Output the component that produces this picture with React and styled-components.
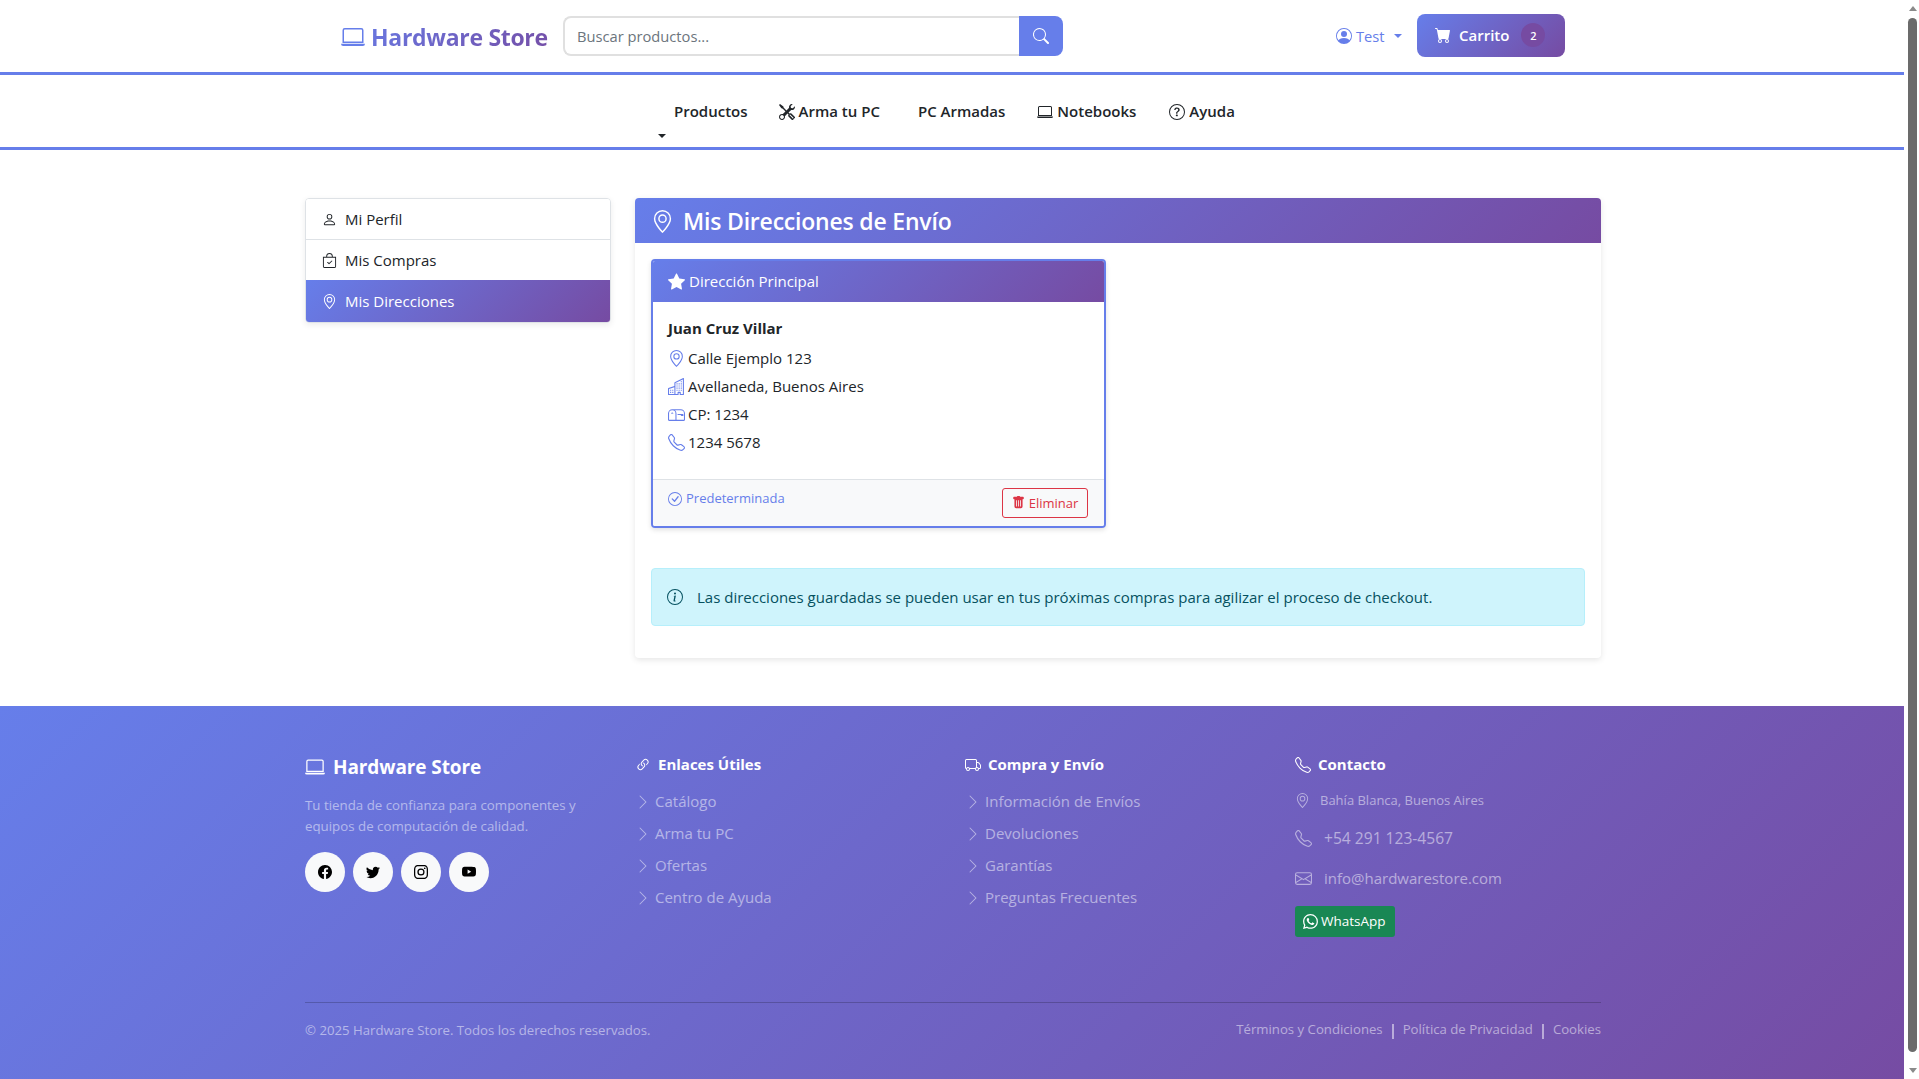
import styled, { createGlobalStyle } from "styled-components";
import {
  BsLaptop,
  BsSearch,
  BsPersonCircle,
  BsCartFill,
  BsTools,
  BsQuestionCircle,
  BsPerson,
  BsBagCheck,
  BsGeoAlt,
  BsStarFill,
  BsBuildings,
  BsMailbox,
  BsTelephone,
  BsCheckCircle,
  BsTrashFill,
  BsInfoCircle,
  BsFacebook,
  BsTwitter,
  BsInstagram,
  BsYoutube,
  BsLink45Deg,
  BsTruck,
  BsChevronRight,
  BsEnvelope,
  BsWhatsapp,
} from "react-icons/bs";

const gradient = "linear-gradient(135deg, #667eea 0%, #764ba2 100%)";

const GlobalStyle = createGlobalStyle`
  html {
    overflow: hidden;
  }
  body {
    margin: 0;
    padding-right: 13px;
    background: #fff;
    color: #212529;
    font-family: "Open Sans", "Noto Sans", sans-serif;
    font-size: 15px;
    line-height: 1.5;
  }
  * {
    box-sizing: border-box;
  }
`;

const ScrollTrack = styled.div`
  position: fixed;
  top: 0;
  right: 0;
  bottom: 0;
  width: 15px;
  padding: 6px 2px 6px 4px;
  background: #fff;
  display: flex;
  flex-direction: column;
  align-items: center;
`;

const ScrollArrow = styled.span`
  border-left: 4.5px solid transparent;
  border-right: 4.5px solid transparent;
  border-${(p) => (p.$down ? "top" : "bottom")}: 5px solid #8a8a8a;
`;

const ScrollThumb = styled.div`
  flex: 1;
  width: 9px;
  margin: 7px 0 16px;
  border-radius: 5px;
  background: #6b6b6b;
`;

const TopBar = styled.header`
  height: 75px;
  margin-right: 2px;
  border-bottom: 3px solid #667eea;
  padding-left: 341px;
  display: flex;
  align-items: center;
`;

const Logo = styled.a`
  display: flex;
  align-items: center;
  gap: 6px;
  width: 222px;
  padding-top: 2px;
  font-size: 23px;
  font-weight: 700;
  letter-spacing: -0.3px;
  background: ${gradient};
  -webkit-background-clip: text;
  background-clip: text;
  color: transparent;
  svg {
    color: #667eea;
    font-size: 24px;
  }
`;

const Search = styled.div`
  width: 500px;
  height: 40px;
  display: flex;
`;

const SearchInput = styled.div`
  flex: 1;
  border: 2px solid #e0e0e0;
  border-right: 0;
  border-radius: 8px 0 0 8px;
  padding-left: 12px;
  display: flex;
  align-items: center;
  color: #6c757d;
  font-size: 14.7px;
`;

const SearchButton = styled.button`
  width: 44px;
  border: 0;
  border-radius: 0 8px 8px 0;
  background: #667eea;
  color: #fff;
  font-size: 16px;
  display: flex;
  align-items: center;
  justify-content: center;
`;

const UserMenu = styled.div`
  margin-left: 273px;
  width: 81px;
  display: flex;
  align-items: center;
  gap: 4px;
  color: #667eea;
  font-size: 14.7px;
  svg {
    font-size: 16px;
  }
`;

const Caret = styled.span`
  display: inline-block;
  margin-left: 5px;
  border-top: 4.5px solid currentColor;
  border-left: 4.5px solid transparent;
  border-right: 4.5px solid transparent;
`;

const CartButton = styled.button`
  height: 43px;
  width: 148px;
  margin-top: -2px;
  border: 0;
  border-radius: 8px;
  background: ${gradient};
  color: #fff;
  font-family: inherit;
  font-size: 15px;
  font-weight: 600;
  display: flex;
  align-items: center;
  padding: 0 0 0 18px;
  gap: 8px;
  svg {
    font-size: 16px;
  }
`;

const CartBadge = styled.span`
  width: 24px;
  height: 24px;
  margin-left: 4px;
  border-radius: 50%;
  background: #764ba2;
  font-size: 11px;
  display: flex;
  align-items: center;
  justify-content: center;
`;

const NavBar = styled.nav`
  height: 75px;
  margin-right: 2px;
  border-bottom: 3px solid #667eea;
  padding: 1px 0 0 657px;
  display: flex;
  align-items: center;
`;

const NavItem = styled.a`
  display: flex;
  align-items: center;
  gap: 4px;
  margin-left: ${(p) => p.$gap}px;
  font-size: 15px;
  font-weight: 600;
  color: #212529;
  position: relative;
  svg {
    font-size: 16px;
  }
`;

const NavCaret = styled.span`
  position: absolute;
  left: -16px;
  top: 34px;
  display: block;
  border-top: 4px solid #212529;
  border-left: 4px solid transparent;
  border-right: 4px solid transparent;
`;

const Main = styled.main`
  width: 1296px;
  margin: 0 auto;
  padding: 48px 0 48px;
  display: grid;
  grid-template-columns: 306px 966px;
  gap: 24px;
`;

const SideMenu = styled.div`
  align-self: start;
  border: 1px solid #dee2e6;
  border-radius: 4px;
  overflow: hidden;
  box-shadow: 0 2px 6px rgba(0, 0, 0, 0.08);
`;

const SideItem = styled.a`
  height: ${(p) => (p.$first ? 40 : p.$active ? 42 : 41)}px;
  display: flex;
  align-items: center;
  gap: 10px;
  padding-left: 16px;
  font-size: 15px;
  background: ${(p) => (p.$active ? gradient : "#fff")};
  color: ${(p) => (p.$active ? "#fff" : "#212529")};
  border-top: ${(p) => (p.$first || p.$active ? 0 : "1px solid #dee2e6")};
  svg {
    font-size: 15px;
    margin-right: -2px;
  }
`;

const Panel = styled.section`
  background: #fff;
  border-radius: 4px;
  box-shadow: 0 2px 6px rgba(0, 0, 0, 0.1);
`;

const PanelHead = styled.h2`
  margin: 0;
  height: 45px;
  padding: 2px 0 0 16px;
  display: flex;
  align-items: center;
  gap: 9px;
  background: ${gradient};
  color: #fff;
  border-radius: 4px 4px 0 0;
  font-size: 23px;
  font-weight: 600;
  letter-spacing: -0.2px;
  svg {
    font-size: 23px;
  }
`;

const PanelBody = styled.div`
  padding: 16px;
`;

const AddressCard = styled.article`
  width: 455px;
  border: 2px solid #667eea;
  border-radius: 4px;
  overflow: hidden;
  box-shadow: 0 2px 5px rgba(0, 0, 0, 0.12);
`;

const CardHead = styled.div`
  height: 41px;
  padding-left: 15px;
  display: flex;
  align-items: center;
  gap: 4px;
  background: ${gradient};
  color: #fff;
  font-size: 15px;
  svg {
    font-size: 17px;
  }
`;

const CardBody = styled.div`
  padding: 15px 15px 22px;
`;

const Name = styled.div`
  font-weight: 700;
  font-size: 15px;
  margin-bottom: 5px;
`;

const AddressLine = styled.div`
  height: 28px;
  display: flex;
  align-items: center;
  gap: 3px;
  font-size: 15px;
  svg {
    color: #667eea;
    font-size: 17px;
  }
`;

const CardFoot = styled.div`
  height: 47px;
  padding: 0 16px 0 15px;
  display: flex;
  align-items: center;
  justify-content: space-between;
  background: #f8f9fa;
  border-top: 1px solid #dee2e6;
`;

const DefaultTag = styled.span`
  display: flex;
  align-items: center;
  gap: 4px;
  color: #667eea;
  font-size: 13px;
  position: relative;
  top: -4px;
  svg {
    font-size: 14px;
  }
`;

const DeleteButton = styled.button`
  height: 30px;
  width: 86px;
  border: 1px solid #dc3545;
  border-radius: 3px;
  background: transparent;
  color: #dc3545;
  font-family: inherit;
  font-size: 13px;
  display: flex;
  align-items: center;
  justify-content: center;
  gap: 4px;
`;

const Alert = styled.div`
  height: 58px;
  margin: 40px 0 16px;
  padding: 1px 0 0 15px;
  display: flex;
  align-items: center;
  gap: 14px;
  background: #cff4fc;
  border: 1px solid #b6effb;
  border-radius: 4px;
  color: #055160;
  font-size: 15px;
  svg {
    font-size: 16px;
  }
`;

const Footer = styled.footer`
  height: 400px;
  background: ${gradient};
  color: #fff;
  padding-top: 47px;
`;

const FooterInner = styled.div`
  width: 1296px;
  margin: 0 auto;
`;

const FooterCols = styled.div`
  display: grid;
  grid-template-columns: repeat(4, 306px);
  gap: 24px;
  height: 249px;
`;

const BrandTitle = styled.h3`
  margin: 0 0 14px;
  display: flex;
  align-items: center;
  gap: 8px;
  font-size: 19px;
  font-weight: 700;
  letter-spacing: -0.1px;
  line-height: 28px;
  svg {
    font-size: 20px;
  }
`;

const Muted = styled.p`
  margin: 0;
  color: rgba(255, 255, 255, 0.5);
  font-size: 13.3px;
  line-height: 21px;
`;

const Socials = styled.div`
  display: flex;
  gap: 8px;
  margin-top: 15px;
`;

const Social = styled.a`
  width: 40px;
  height: 40px;
  border-radius: 50%;
  background: #f8f9fa;
  color: #000;
  font-size: 14px;
  display: flex;
  align-items: center;
  justify-content: center;
`;

const ColTitle = styled.h4`
  margin: 0 0 9px;
  height: 24px;
  display: flex;
  align-items: center;
  gap: 7px;
  font-size: 15px;
  font-weight: 700;
  svg {
    font-size: 16px;
  }
`;

const LinkList = styled.ul`
  list-style: none;
  margin: 0;
  padding: 0;
`;

const LinkItem = styled.li`
  height: 32px;
  display: flex;
  align-items: center;
  gap: 4px;
  color: rgba(255, 255, 255, 0.5);
  font-size: 15px;
  svg {
    font-size: 16px;
  }
`;

const ContactLine = styled.div`
  height: ${(p) => p.$h || 40}px;
  margin-top: ${(p) => p.$top || 0}px;
  display: flex;
  align-items: center;
  gap: ${(p) => p.$gap || 12}px;
  color: rgba(255, 255, 255, 0.5);
  font-size: ${(p) => p.$size || 15}px;
  svg {
    font-size: ${(p) => p.$icon || 17}px;
  }
`;

const WhatsApp = styled.a`
  display: inline-flex;
  align-items: center;
  gap: 3px;
  height: 31px;
  width: 100px;
  margin-top: 7px;
  padding-left: 8px;
  background: #198754;
  border-radius: 3px;
  color: #fff;
  font-size: 13.5px;
  svg {
    font-size: 15px;
  }
`;

const Bottom = styled.div`
  border-top: 1px solid rgba(0, 0, 0, 0.2);
  padding-top: 17px;
  display: flex;
  justify-content: space-between;
  align-items: flex-start;
  color: rgba(255, 255, 255, 0.5);
  font-size: 13.2px;
`;

const Copyright = styled.span`
  padding-top: 1px;
`;

const LegalLinks = styled.div`
  display: flex;
  align-items: center;
`;

const Divider = styled.span`
  width: 2px;
  height: 15px;
  margin: 4px 9px 0;
  background: rgba(255, 255, 255, 0.5);
`;

const links1 = ["Catálogo", "Arma tu PC", "Ofertas", "Centro de Ayuda"];
const links2 = ["Información de Envíos", "Devoluciones", "Garantías", "Preguntas Frecuentes"];

const App = () => (
  <>
    <GlobalStyle />
    <TopBar>
      <Logo>
        <BsLaptop />
        Hardware Store
      </Logo>
      <Search>
        <SearchInput>Buscar productos...</SearchInput>
        <SearchButton>
          <BsSearch />
        </SearchButton>
      </Search>
      <UserMenu>
        <BsPersonCircle />
        Test
        <Caret />
      </UserMenu>
      <CartButton>
        <BsCartFill />
        Carrito
        <CartBadge>2</CartBadge>
      </CartButton>
    </TopBar>
    <NavBar>
      <NavItem $gap={17}>
        Productos
        <NavCaret />
      </NavItem>
      <NavItem $gap={31}>
        <BsTools />
        Arma tu PC
      </NavItem>
      <NavItem $gap={38}>PC Armadas</NavItem>
      <NavItem $gap={32}>
        <BsLaptop />
        Notebooks
      </NavItem>
      <NavItem $gap={33}>
        <BsQuestionCircle />
        Ayuda
      </NavItem>
    </NavBar>
    <Main>
      <SideMenu>
        <SideItem $first>
          <BsPerson />
          Mi Perfil
        </SideItem>
        <SideItem>
          <BsBagCheck />
          Mis Compras
        </SideItem>
        <SideItem $active>
          <BsGeoAlt />
          Mis Direcciones
        </SideItem>
      </SideMenu>
      <Panel>
        <PanelHead>
          <BsGeoAlt />
          Mis Direcciones de Envío
        </PanelHead>
        <PanelBody>
          <AddressCard>
            <CardHead>
              <BsStarFill />
              Dirección Principal
            </CardHead>
            <CardBody>
              <Name>Juan Cruz Villar</Name>
              <AddressLine>
                <BsGeoAlt />
                Calle Ejemplo 123
              </AddressLine>
              <AddressLine>
                <BsBuildings />
                Avellaneda, Buenos Aires
              </AddressLine>
              <AddressLine>
                <BsMailbox />
                CP: 1234
              </AddressLine>
              <AddressLine>
                <BsTelephone />
                1234 5678
              </AddressLine>
            </CardBody>
            <CardFoot>
              <DefaultTag>
                <BsCheckCircle />
                Predeterminada
              </DefaultTag>
              <DeleteButton>
                <BsTrashFill />
                Eliminar
              </DeleteButton>
            </CardFoot>
          </AddressCard>
          <Alert>
            <BsInfoCircle />
            Las direcciones guardadas se pueden usar en tus próximas compras para agilizar el proceso de checkout.
          </Alert>
        </PanelBody>
      </Panel>
    </Main>
    <Footer>
      <FooterInner>
        <FooterCols>
          <div>
            <BrandTitle>
              <BsLaptop />
              Hardware Store
            </BrandTitle>
            <Muted>
              Tu tienda de confianza para componentes y
              <br />
              equipos de computación de calidad.
            </Muted>
            <Socials>
              <Social><BsFacebook /></Social>
              <Social><BsTwitter /></Social>
              <Social><BsInstagram /></Social>
              <Social><BsYoutube /></Social>
            </Socials>
          </div>
          <div>
            <ColTitle>
              <BsLink45Deg />
              Enlaces Útiles
            </ColTitle>
            <LinkList>
              {links1.map((l) => (
                <LinkItem key={l}>
                  <BsChevronRight />
                  {l}
                </LinkItem>
              ))}
            </LinkList>
          </div>
          <div>
            <ColTitle>
              <BsTruck />
              Compra y Envío
            </ColTitle>
            <LinkList>
              {links2.map((l) => (
                <LinkItem key={l}>
                  <BsChevronRight />
                  {l}
                </LinkItem>
              ))}
            </LinkList>
          </div>
          <div>
            <ColTitle>
              <BsTelephone />
              Contacto
            </ColTitle>
            <ContactLine $h={30} $size={13} $icon={15} $gap={10}>
              <BsGeoAlt />
              Bahía Blanca, Buenos Aires
            </ContactLine>
            <ContactLine $top={3} $size={15.6}>
              <BsTelephone />
              +54 291 123-4567
            </ContactLine>
            <ContactLine>
              <BsEnvelope />
              info@hardwarestore.com
            </ContactLine>
            <WhatsApp>
              <BsWhatsapp />
              WhatsApp
            </WhatsApp>
          </div>
        </FooterCols>
        <Bottom>
          <Copyright>© 2025 Hardware Store. Todos los derechos reservados.</Copyright>
          <LegalLinks>
            Términos y Condiciones
            <Divider />
            Política de Privacidad
            <Divider />
            Cookies
          </LegalLinks>
        </Bottom>
      </FooterInner>
    </Footer>
    <ScrollTrack>
      <ScrollArrow />
      <ScrollThumb />
      <ScrollArrow $down />
    </ScrollTrack>
  </>
);

export default App;
